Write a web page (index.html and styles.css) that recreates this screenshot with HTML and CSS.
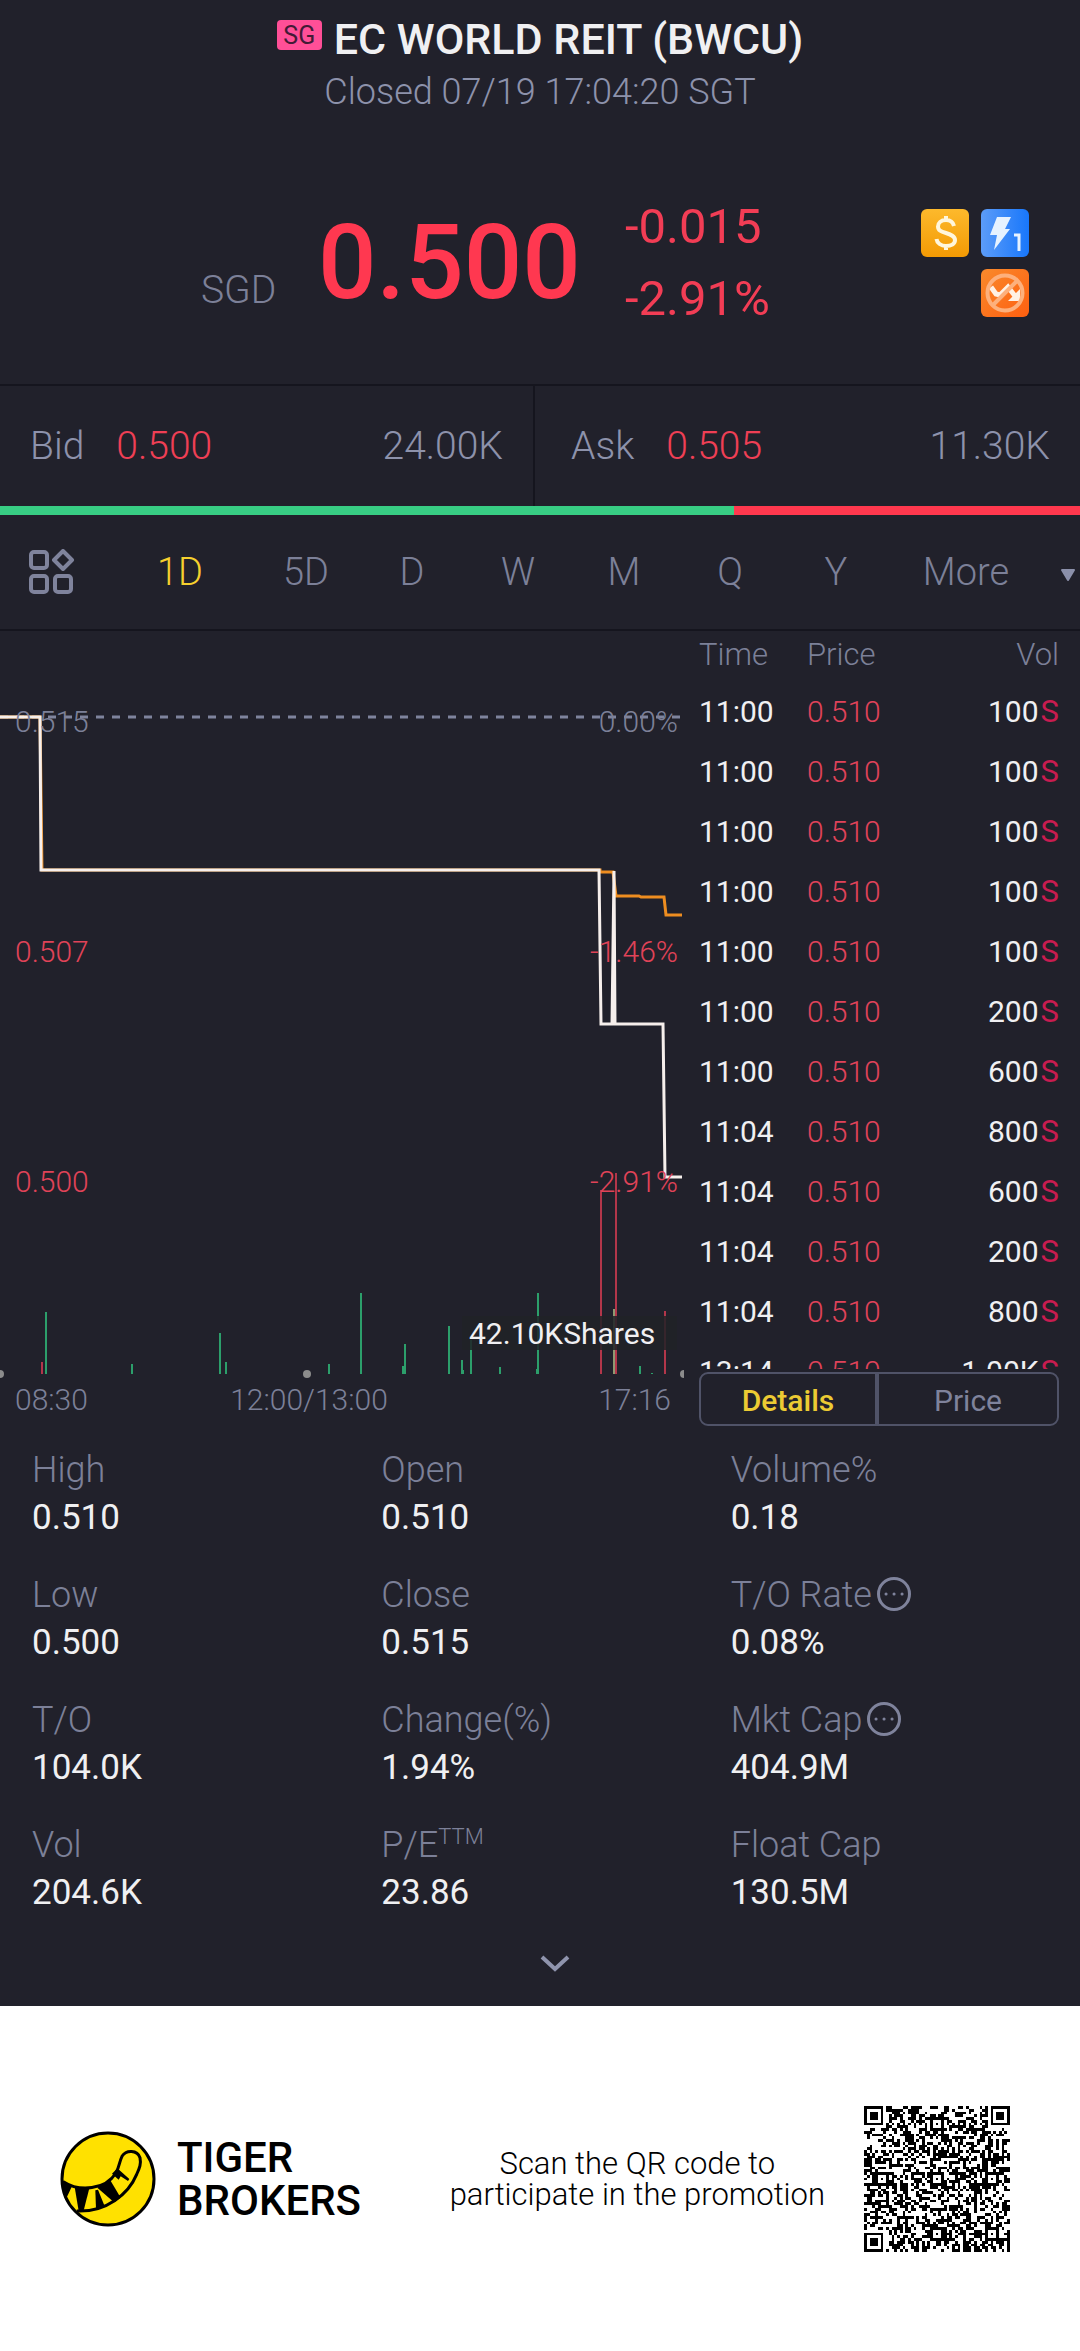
FILE: index.html
```
<!DOCTYPE html>
<html lang="en">
<head>
  <meta charset="UTF-8" />
  <meta name="viewport" content="width=device-width, initial-scale=1.0"/>
  <title>EC WORLD REIT (BWCU)</title>
  <link rel="stylesheet" href="styles.css">
</head>
<body>

  <header class="header">
    <div class="title-row">
      <span class="market">SG</span>
      <h1>EC WORLD REIT (BWCU)</h1>
    </div>
    <p class="status">Closed 07/19 17:04:20 SGT</p>
  </header>

  <section class="quote">
    <span class="currency">SGD</span>
    <span class="price">0.500</span>
    <div class="change">
      <div>-0.015</div>
      <div>-2.91%</div>
    </div>
    <div class="badges">
      <svg viewBox="0 0 48 48" aria-hidden="true">
        <defs>
          <linearGradient id="gold" x1="0" y1="0" x2="0" y2="1"><stop offset="0" stop-color="#fdb92c"/><stop offset="1" stop-color="#f39a04"/></linearGradient>
          <linearGradient id="blue" x1="0" y1="0" x2="1" y2="0"><stop offset="0" stop-color="#5c9cf8"/><stop offset="1" stop-color="#1877fb"/></linearGradient>
          <linearGradient id="orange" x1="0" y1="0" x2="1" y2="1"><stop offset="0" stop-color="#f98a2c"/><stop offset="1" stop-color="#fe5f10"/></linearGradient>
        </defs>
        <rect width="48" height="48" rx="6" fill="url(#gold)"/>
        <path d="M33 17c-1-4-4-6-8-6-5 0-8 3-8 6.500 0 4 3 5 8 6.500s9 3 9 7c0 4-4 6-9 6s-9-3-9.500-7M25 7v5M25 36v5" fill="none" stroke="#fff6dc" stroke-width="4"/>
      </svg>
      <svg viewBox="0 0 48 48" aria-hidden="true">
        <rect width="48" height="48" rx="6" fill="url(#blue)"/>
        <path d="M16 8h14l-6 12h5L13 41l3-15h-7z" fill="#e6f2ff"/>
        <path d="M33 26h5v16" fill="none" stroke="#e6f2ff" stroke-width="3"/>
      </svg>
      <svg viewBox="0 0 48 48" aria-hidden="true">
        <rect width="48" height="48" rx="6" fill="url(#orange)"/>
        <path d="M10 18l5 7 4 1 8-8 7 9" fill="none" stroke="#fff1e4" stroke-width="5"/>
        <path d="M39 20v12H27z" fill="#fff1e4"/>
        <circle cx="24" cy="24" r="17.500" fill="none" stroke="#fdb07c" stroke-width="4"/>
        <path d="M12 36l24-24" stroke="#fdb07c" stroke-width="4"/>
      </svg>
    </div>
  </section>

  <section class="book">
    <div class="side bid">
      <span>Bid</span>
      <span class="down">0.500</span>
      <span class="size">24.00K</span>
    </div>
    <div class="side ask">
      <span>Ask</span>
      <span class="down">0.505</span>
      <span class="size">11.30K</span>
    </div>
  </section>
  <div class="ratio"><i class="ratio-bid" style="width: 68%"></i></div>

  <nav class="tabs">
    <button class="tab tab-icon" aria-label="Indicators">
      <svg viewBox="0 0 46 46" fill="none" stroke="#7f839c" stroke-width="4">
        <rect x="2" y="3" width="16" height="16" rx="3"/>
        <rect x="2" y="27" width="16" height="16" rx="3"/>
        <rect x="26" y="27" width="16" height="16" rx="3"/>
        <path d="M34 2l9 9-9 9-9-9z" stroke-linejoin="round"/>
      </svg>
    </button>
    <button class="tab active">1D</button>
    <button class="tab">5D</button>
    <button class="tab">D</button>
    <button class="tab">W</button>
    <button class="tab">M</button>
    <button class="tab">Q</button>
    <button class="tab">Y</button>
    <button class="tab">More</button>
    <button class="tab tab-arrow" aria-label="More periods">
      <svg viewBox="0 0 16 14"><path d="M2 2h12L8 12z" fill="#8b90aa" stroke="#8b90aa" stroke-width="2" stroke-linejoin="round"/></svg>
    </button>
  </nav>

  <section class="market-data">
    <svg class="chart" viewBox="0 1 686 802" role="img" aria-label="Intraday chart">
      <!-- volume -->
      <g class="vol-up">
        <path d="M46 682V744M132 734V744M220 703V744M226 732V744M329 734V744M361 663V744M403 736V744M405 714V744M449 696V744M462 730V744M463 740V744M471 710V744M500 737V744M537 739V744M538 663V744M640 736V744M652 743V744"/>
      </g>
      <g class="vol-down">
        <path d="M42 732V744M601 560V744M616 543V744M665 681V744"/>
      </g>
      <path class="vol-mixed" d="M614 679V744"/>

      <!-- previous close, average and price -->
      <path class="prev-close" d="M0 87H681"/>
      <path class="avg" d="M0 87H40L42 240H600V242H613L616 266H639L641 267H664L666 285H682"/>
      <path class="line" d="M0 87H40L41 240H599L601 394H612L614 241L615 394H663L665 547H682"/>

      <g class="axis">
        <text x="15" y="102">0.515</text>
        <text x="15" y="332" class="neg">0.507</text>
        <text x="15" y="562" class="neg">0.500</text>
        <text x="678" y="102" class="end">0.00%</text>
        <text x="678" y="332" class="end neg">-1.46%</text>
        <text x="678" y="562" class="end neg">-2.91%</text>
        <text x="15" y="780">08:30</text>
        <text x="309" y="780" class="mid">12:00/13:00</text>
        <text x="671" y="780" class="end">17:16</text>
      </g>

      <rect x="462" y="686" width="215" height="34" class="vol-box"/>
      <text x="469" y="714" class="vol-text">42.10KShares</text>

      <g fill="#8c8c8c">
        <circle cx="0" cy="744" r="4"/>
        <circle cx="307" cy="744" r="4"/>
        <path d="M684 740a4 4 0 0 0 0 8z"/>
      </g>
    </svg>

    <div class="ticks">
      <div class="ticks-list">
        <table>
          <thead>
            <tr><th>Time</th><th>Price</th><th>Vol</th></tr>
          </thead>
          <tbody>
            <tr><td>11:00</td><td>0.510</td><td>100<b>S</b></td></tr>
            <tr><td>11:00</td><td>0.510</td><td>100<b>S</b></td></tr>
            <tr><td>11:00</td><td>0.510</td><td>100<b>S</b></td></tr>
            <tr><td>11:00</td><td>0.510</td><td>100<b>S</b></td></tr>
            <tr><td>11:00</td><td>0.510</td><td>100<b>S</b></td></tr>
            <tr><td>11:00</td><td>0.510</td><td>200<b>S</b></td></tr>
            <tr><td>11:00</td><td>0.510</td><td>600<b>S</b></td></tr>
            <tr><td>11:04</td><td>0.510</td><td>800<b>S</b></td></tr>
            <tr><td>11:04</td><td>0.510</td><td>600<b>S</b></td></tr>
            <tr><td>11:04</td><td>0.510</td><td>200<b>S</b></td></tr>
            <tr><td>11:04</td><td>0.510</td><td>800<b>S</b></td></tr>
            <tr><td>13:14</td><td>0.510</td><td>1.00K<b>S</b></td></tr>
          </tbody>
        </table>
      </div>
      <div class="switch">
        <button class="active">Details</button>
        <button>Price</button>
      </div>
    </div>
  </section>

  <dl class="stats">
    <div><dt>High</dt><dd>0.510</dd></div>
    <div><dt>Open</dt><dd>0.510</dd></div>
    <div><dt>Volume%</dt><dd>0.18</dd></div>
    <div><dt>Low</dt><dd>0.500</dd></div>
    <div><dt>Close</dt><dd>0.515</dd></div>
    <div>
      <dt>T/O Rate
        <svg class="info" viewBox="0 0 34 34"><circle cx="17" cy="17" r="15.500"/><path d="M9 17h.1M17 17h.1M25 17h.1"/></svg>
      </dt>
      <dd>0.08%</dd>
    </div>
    <div><dt>T/O</dt><dd>104.0K</dd></div>
    <div><dt>Change(%)</dt><dd>1.94%</dd></div>
    <div>
      <dt>Mkt Cap
        <svg class="info" viewBox="0 0 34 34"><circle cx="17" cy="17" r="15.500"/><path d="M9 17h.1M17 17h.1M25 17h.1"/></svg>
      </dt>
      <dd>404.9M</dd>
    </div>
    <div><dt>Vol</dt><dd>204.6K</dd></div>
    <div><dt><span>P/E<sup>TTM</sup></span></dt><dd>23.86</dd></div>
    <div><dt>Float Cap</dt><dd>130.5M</dd></div>
  </dl>

  <button class="expand" aria-label="Show more">
    <svg viewBox="0 0 32 20"><path d="M3 4l13 12L29 4" fill="none" stroke="#8f94ad" stroke-width="4"/></svg>
  </button>

  <footer class="footer">
    <div class="brand">
      <svg viewBox="0 0 288 288" aria-hidden="true">
        <circle cx="144" cy="144" r="138" fill="#ffe100"/>
        <g fill="#000">
          <path d="M8 148L36 166 16 208 6 170z"/>
          <path d="M44 168L88 172 70 242 56 240z"/>
          <path d="M106 178L114 176 134 226 108 234z"/>
          <path d="M112 170L150 146 182 200 162 214z"/>
          <path d="M156 128L172 112 208 144 204 150 182 136 176 146z"/>
        </g>
        <g fill="none" stroke="#000" stroke-width="9">
          <path d="M10 152C60 184 136 176 168 126 178 108 178 92 186 76 198 56 232 56 240 80 244 100 238 112 230 130 206 188 140 244 50 240"/>
          <circle cx="144" cy="144" r="138"/>
        </g>
      </svg>
      <strong>TIGER<br>BROKERS</strong>
    </div>
    <p class="promo">Scan the QR code to<br>participate in the promotion</p>
    <svg class="qr" id="qr" viewBox="0 0 53 53" role="img" aria-label="QR code"></svg>
  </footer>

  <script src="script.js"></script>
</body>
</html>
```

FILE: styles.css
```
* {
  box-sizing: border-box;
}
body {
  font-family: Roboto, "Liberation Sans", sans-serif;
  font-weight: 300;
  background: #21212b;
  color: #f0f0f2;
  margin: 0;
}
button {
  font: inherit;
  color: inherit;
  background: none;
  border: none;
  padding: 0;
  cursor: pointer;
}
.header {
  padding-top: 13px;
  text-align: center;
}
.title-row {
  display: flex;
  justify-content: center;
  gap: 12px;
}
h1 {
  margin: 0;
  font-size: 43px;
  font-weight: 500;
  line-height: 52px;
}
.market {
  width: 45px;
  height: 30px;
  margin-top: 7px;
  border-radius: 4px;
  background: #ff4f97;
  color: #431a36;
  font-size: 25px;
  font-weight: 400;
  line-height: 32px;
}
.status {
  margin: 4px 0 0;
  font-size: 36px;
  line-height: 46px;
  color: #8d92ab;
}
.quote {
  display: flex;
  align-items: center;
  height: 193px;
  padding: 0 51px 49px 201px;
  margin-top: 76px;
  white-space: nowrap;
}
.currency {
  align-self: flex-end;
  width: 117px;
  font-size: 39px;
  line-height: 90px;
  color: #7c8098;
}
.price {
  width: 307px;
  font-size: 103px;
  font-weight: 500;
  line-height: 144px;
  color: #ff3850;
}
.change {
  font-size: 49px;
  font-weight: 400;
  line-height: 72px;
  color: #f23d55;
}
.badges {
  display: flex;
  flex-wrap: wrap;
  justify-content: flex-end;
  gap: 12px;
  width: 108px;
  margin-left: auto;
}
.badges svg {
  width: 48px;
  height: 48px;
}
.book {
  display: grid;
  grid-template-columns: 535fr 545fr;
  border-top: 2px solid #15151e;
}
.side {
  display: flex;
  align-items: center;
  gap: 32px;
  height: 120px;
  padding: 0 30px;
  font-size: 39px;
  color: #8d92ab;
}
.bid {
  border-right: 2px solid #15151e;
}
.ask {
  padding-left: 36px;
}
.down {
  color: #ef3f55;
}
.size {
  margin-left: auto;
}
.ratio {
  height: 9px;
  background: #ff384e;
}
.ratio-bid {
  display: block;
  height: 100%;
  background: #38cd84;
}
.tabs {
  display: grid;
  grid-template-columns: 107fr 146fr repeat(6, 106fr) 154fr 37fr;
  border-bottom: 2px solid #15151e;
}
.tab {
  height: 114px;
  font-size: 38px;
  font-weight: 300;
  color: #7c8098;
}
.tab.active {
  color: #f6d02e;
}
.tab-icon {
  padding-left: 29px;
  text-align: left;
}
.tab-icon svg {
  display: block;
  width: 46px;
  height: 46px;
}
.tab-arrow {
  padding: 0 4px 6px 0;
  text-align: right;
}
.tab-arrow svg {
  width: 16px;
  height: 14px;
}
.market-data {
  display: grid;
  grid-template-columns: 686fr 394fr;
}
.chart {
  display: block;
  width: 100%;
}
.chart path {
  fill: none;
  stroke-width: 2;
}
.chart g[fill] path {
  fill: #8c8c8c;
}
.vol-up {
  stroke: #2c9f6b;
}
.vol-down {
  stroke: #b3364a;
}
.vol-mixed {
  stroke: #8f9a72;
}
.chart .prev-close {
  stroke: #7f849d;
  stroke-width: 3;
  stroke-dasharray: 8 8;
}
.chart .avg {
  stroke: #ee8d20;
  stroke-width: 3;
}
.chart .line {
  stroke: #f6efec;
  stroke-width: 3;
}
.axis text {
  font-size: 30px;
  fill: #7c8098;
}
.axis .neg {
  fill: #e04358;
}
.axis .end {
  text-anchor: end;
}
.axis .mid {
  text-anchor: middle;
}
.vol-box {
  fill: #202227;
  fill-opacity: 0.85;
}
.vol-text {
  font-size: 30px;
  font-weight: 400;
  fill: #f0f0f2;
}
.ticks {
  padding: 0 21px 0 13px;
}
.ticks-list {
  height: 738px;
  overflow: hidden;
}
table {
  width: 100%;
  border-collapse: collapse;
}
th, td {
  padding: 0;
  text-align: left;
}
th {
  height: 51px;
  font-size: 31px;
  font-weight: 300;
  line-height: 48px;
  vertical-align: top;
  color: #7c8098;
}
td {
  font-size: 30px;
  font-weight: 400;
  line-height: 60px;
}
th:first-child, td:first-child {
  width: 30%;
}
th:last-child, td:last-child {
  text-align: right;
}
td:nth-child(2) {
  font-weight: 300;
  color: #e0435a;
}
td b {
  margin-left: 2px;
  font-size: 31px;
  font-weight: 400;
  color: #c81c50;
}
.switch {
  display: grid;
  grid-template-columns: 1fr 1fr;
  height: 54px;
  margin-top: 3px;
  border: 2px solid #505368;
  border-radius: 9px;
}
.switch button {
  padding-top: 2px;
  font-size: 30px;
  font-weight: 400;
  color: #7f839c;
}
.switch .active {
  border-right: 4px solid #505368;
  font-weight: 500;
  color: #eccb33;
}
.stats {
  display: grid;
  grid-template-columns: repeat(3, 1fr);
  row-gap: 29px;
  margin: 0;
  padding: 13px 0 0 32px;
  font-size: 36px;
  line-height: 48px;
}
dt {
  display: flex;
  align-items: center;
  gap: 5px;
  height: 48px;
  color: #7c8098;
}
dd {
  margin: 0;
  font-size: 35px;
  font-weight: 400;
}
sup {
  font-size: 22px;
  line-height: 0;
}
.info {
  width: 34px;
  height: 34px;
  margin-bottom: 3px;
  fill: none;
  stroke: #7f839c;
  stroke-width: 3;
  stroke-linecap: round;
}
.expand {
  display: block;
  width: 100%;
  height: 89px;
  padding: 6px 0 0 30px;
}
.expand svg {
  width: 32px;
  height: 20px;
}
.footer {
  display: flex;
  align-items: center;
  gap: 39px;
  height: 345px;
  padding: 0 70px 0 60px;
  background: #fff;
  color: #000;
}
.brand {
  display: flex;
  align-items: center;
  gap: 21px;
  margin-right: auto;
}
.brand svg {
  width: 96px;
  height: 96px;
}
.brand strong {
  font-size: 42px;
  font-weight: 500;
  line-height: 43px;
}
.promo {
  margin: 0;
  font-size: 31px;
  line-height: 31px;
  text-align: center;
}
.qr {
  width: 146px;
  height: 146px;
}
```

FILE: script.js
```
// draws the QR code, one rect per dark module
const N = 53;
const svg = document.getElementById("qr");
const finders = [[0, 0], [N - 7, 0], [0, N - 7]];
const aligns = [[26, 6], [6, 26], [26, 26], [46, 26], [26, 46], [46, 46]];
let seed = 20190719;

function random() {
  seed = (seed * 1103515245 + 12345) % 2147483648;
  return seed / 2147483648;
}

function isDark(x, y) {
  const noise = random() < 0.5;
  for (const [fx, fy] of finders) {
    const d = Math.max(Math.abs(x - fx - 3), Math.abs(y - fy - 3));
    if (d <= 4) return d !== 2 && d !== 4;
  }
  for (const [ax, ay] of aligns) {
    const d = Math.max(Math.abs(x - ax), Math.abs(y - ay));
    if (d <= 2) return d !== 1;
  }
  if (x === 6 || y === 6) return (x + y) % 2 === 0;
  return noise;
}

let d = "";
for (let y = 0; y < N; y++) {
  for (let x = 0; x < N; x++) {
    if (isDark(x, y)) d += `M${x} ${y}h1v1h-1z`;
  }
}
svg.innerHTML = `<path d="${d}" shape-rendering="crispEdges"/>`;
```
